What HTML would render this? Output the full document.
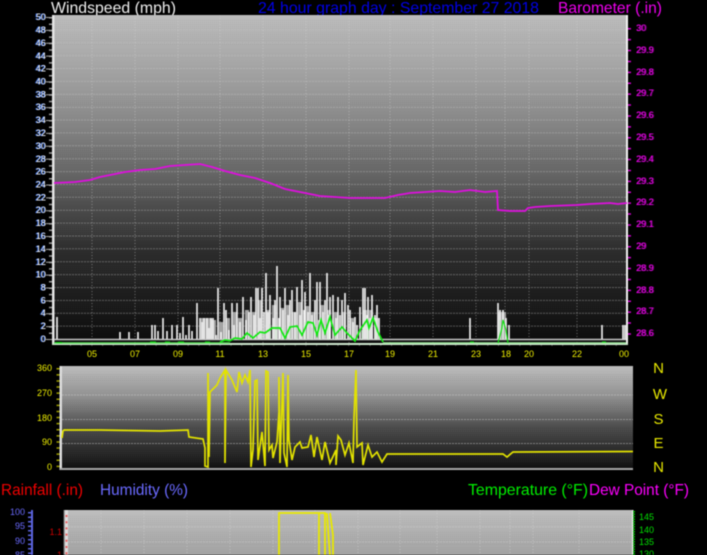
<!DOCTYPE html>
<html><head><meta charset="utf-8"><style>
html,body{margin:0;padding:0;background:#000;width:707px;height:555px;overflow:hidden}
svg{display:block;filter:blur(.45px)}
text{font-family:"Liberation Sans",sans-serif}
.t{font-size:16px}
</style></head><body>
<svg width="707" height="555" viewBox="0 0 707 555" xmlns="http://www.w3.org/2000/svg">
<defs>
<linearGradient id="g1" x1="0" y1="0" x2="0" y2="1">
<stop offset="0" stop-color="#bdbdbd"/><stop offset=".25" stop-color="#969696"/><stop offset=".48" stop-color="#666"/><stop offset=".6" stop-color="#484848"/><stop offset=".72" stop-color="#2c2c2c"/><stop offset=".86" stop-color="#1c1c1c"/><stop offset="1" stop-color="#0c0c0c"/>
</linearGradient>
<linearGradient id="g2" x1="0" y1="0" x2="0" y2="1">
<stop offset="0" stop-color="#bdbdbd"/><stop offset=".3" stop-color="#8f8f8f"/><stop offset=".6" stop-color="#4a4a4a"/><stop offset="1" stop-color="#0e0e0e"/>
</linearGradient>
<linearGradient id="g3" x1="0" y1="0" x2="0" y2="1">
<stop offset="0" stop-color="#bebebe"/><stop offset="1" stop-color="#a2a2a2"/>
</linearGradient>
<pattern id="dots" width="2" height="2" patternUnits="userSpaceOnUse"><rect width="1" height="1" fill="#000" fill-opacity=".06"/><rect x="1" y="1" width="1" height="1" fill="#fff" fill-opacity=".04"/></pattern>
</defs>
<rect width="707" height="555" fill="#000"/>

<text class="t" x="51" y="13" fill="#eee" textLength="125" lengthAdjust="spacingAndGlyphs">Windspeed (mph)</text>
<text class="t" x="258" y="13" fill="#0000e6" textLength="281" lengthAdjust="spacingAndGlyphs">24 hour graph day : September 27 2018</text>
<text class="t" x="558" y="13" fill="#ee00ee" textLength="104" lengthAdjust="spacingAndGlyphs">Barometer (.in)</text>

<!-- main chart -->
<rect x="54" y="15" width="572" height="329" fill="url(#g1)"/>
<path d="M54 20H626V45H54ZM54 95H626V108H54ZM54 148H626V165H54ZM54 185H626V200H54ZM54 225H626V240H54ZM54 265H626V285H54ZM54 300H626V315H54Z" fill="url(#dots)"/>
<path d="M54 326.1H626M54 313.2H626M54 300.4H626M54 287.5H626M54 274.6H626M54 261.7H626M54 248.8H626M54 236H626M54 223.1H626M54 210.2H626M54 197.3H626M54 184.4H626M54 171.6H626M54 158.7H626M54 145.8H626M54 132.9H626M54 120H626M54 107.2H626M54 94.3H626M54 81.4H626M54 68.5H626M54 55.6H626M54 42.8H626M54 29.9H626" stroke="#c8c8c8" stroke-opacity=".38" stroke-width="1" stroke-dasharray="2 1"/>
<path d="M92 15V344M135 15V344M178 15V344M220 15V344M263 15V344M306 15V344M349 15V344M390 15V344M433 15V344M476 15V344M505 15V344M529 15V344M577 15V344" stroke="#d8d8d8" stroke-opacity=".45" stroke-width="1" stroke-dasharray="1 2"/>
<!-- axes -->
<rect x="52" y="15" width="2.5" height="330" fill="#e4e4e4"/>
<rect x="626" y="15" width="2" height="330" fill="#f2f2f2"/>
<rect x="52" y="343" width="576" height="2" fill="#cfe8cf"/>
<path d="M50.5 17V340" stroke="#999" stroke-width="3" stroke-dasharray="1.5 4.94"/>
<path d="M49 17V340" stroke="#aaa" stroke-width="6" stroke-dasharray="1 11.88"/>
<path d="M629.5 28V340" stroke="#c0c" stroke-width="3" stroke-dasharray="1.5 9.4"/>
<!-- baseline -->
<path d="M54 339.5H626" stroke="#c8c8c8" stroke-width="1.6"/>
<!-- gray bars -->
<path d="M203 339V318M206 339V318M210 339V318M214 339V320M221 339V322M228 339V318M235 339V312M240 339V318M247 339V310M254 339V312M260 339V300M268 339V310M274 339V305M282 339V308M288 339V305M294 339V312M300 339V302M307 339V306M313 339V312M322 339V305M329 339V310M336 339V312M344 339V312M352 339V318M365 339V310M371 339V310M376 339V318M500 339V312M504 339V312" stroke="#a4a4a4" stroke-width="4"/>
<!-- white gust bars -->
<path d="M57 339V317M120 339V332M129 339V332M138 339V332M152 339V325M155 339V325M158 339V331M163 339V318M167 339V331M172 339V325M177 339V325M180 339V333M183 339V317M186 339V335M189 339V325M192 339V331M197 339V303M200 339V318M202 339V322M204 339V318M207 339V318M209 339V328M211 339V318M213 339V318M216 339V335M218 339V288M221 339V332M224 339V303M226 339V310M229 339V330M232 339V303M234 339V325M237 339V303M240 339V322M243 339V297M246 339V320M249 339V312M251 339V297M254 339V315M256 339V288M258 339V288M260 339V318M262 339V288M264 339V312M266 339V273M268 339V312M270 339V295M273 339V318M275 339V300M277 339V266M279 339V318M280 339V297M283 339V310M285 339V288M288 339V315M290 339V300M292 339V290M295 339V312M297 339V287M300 339V315M302 339V280M304 339V310M305 339V292M308 339V312M310 339V273M312 339V315M315 339V300M317 339V282M319 339V320M320 339V282M323 339V312M325 339V300M327 339V273M329 339V315M330 339V297M333 339V295M336 339V318M338 339V297M340 339V315M342 339V300M345 339V293M348 339V305M350 339V310M353 339V322M355 339V317M357 339V325M360 339V307M363 339V288M365 339V288M367 339V315M368 339V297M370 339V318M372 339V295M375 339V315M377 339V305M379 339V318M470 339V318M498 339V303M500 339V310M503 339V310M506 339V318M509 339V325M602 339V325M623 339V325M625 339V325" stroke="#f4f4f4" stroke-width="1.6"/>
<!-- pale bars -->
<path d="M262 340V330M270 340V324M276 340V330M282 340V328M290 340V322M297 340V330M305 340V322M312 340V328M320 340V326M328 340V324M336 340V330M345 340V332M362 340V330M368 340V324M376 340V330M500 340V320M503 340V328" stroke="#cfe8cf" stroke-width="1.5" stroke-opacity=".8"/>
<!-- green -->
<path d="M54 343H230" stroke="#5fe05f" stroke-width="1.5"/>
<path d="M383 343H626" stroke="#9ee89e" stroke-width="1.5"/>
<polyline fill="none" stroke="#12e812" stroke-width="1.7" points="220,342 225,340 230,340.7 235,338 242,339 247,333 253,338 260,332 265,333 272,328 280,328 285,338 290,327 297,326 302,335 308,322 313,323 317,335 321,320 325,333 330,317 335,335 342,327 347,333 355,341 360,330 367,320 369,328 373,318 378,332 383,342"/>
<path d="M56 342.5H62M150 342H156M165 342H170M178 342H184M205 342H210M470 342H474M602 342H606" stroke="#12e012" stroke-width="1"/>
<polyline fill="none" stroke="#12e012" stroke-width="1.2" points="498,343 502,328 503,320 506,330 508,343"/>
<!-- barometer -->
<polyline fill="none" stroke="#dd10dd" stroke-width="1.8" points="54,183 75,182 90,180 100,177 110,175 125,172 140,170 155,169 170,166 185,165 200,164 212,167 225,171 240,175 255,178 270,183 285,189 300,192 320,196 335,197 350,198 370,198 385,198 398,195 410,193 425,192 440,191 455,192 470,190 485,192 497,191 498,210 510,211 522,211 525,211 528,208 535,207 550,206 577,205 590,204 610,203 618,204 627,203"/>

<!-- left labels -->
<g fill="#fff" text-anchor="end" font-size="9" style="filter:drop-shadow(-1px 0 0 #3a78ff)">
<text x="46" y="20">50</text><text x="46" y="33">48</text><text x="46" y="46">46</text><text x="46" y="59">44</text><text x="46" y="71.5">42</text><text x="46" y="84.5">40</text><text x="46" y="97.5">38</text><text x="46" y="110">36</text><text x="46" y="123">34</text><text x="46" y="136">32</text><text x="46" y="149">30</text><text x="46" y="162">28</text><text x="46" y="174.5">26</text><text x="46" y="187.5">24</text><text x="46" y="200.5">22</text><text x="46" y="213">20</text><text x="46" y="226">18</text><text x="46" y="239">16</text><text x="46" y="252">14</text><text x="46" y="265">12</text><text x="46" y="277.5">10</text><text x="46" y="290.5">8</text><text x="46" y="303.5">6</text><text x="46" y="316">4</text><text x="46" y="329">2</text><text x="46" y="342">0</text>
</g>
<!-- right labels -->
<g fill="#f0f" font-size="9" style="filter:drop-shadow(1px 0 0 #7a0a7a)">
<text x="636" y="31">30</text><text x="636" y="53">29.9</text><text x="636" y="75">29.8</text><text x="636" y="96">29.7</text><text x="636" y="118">29.6</text><text x="636" y="140">29.5</text><text x="636" y="162">29.4</text><text x="636" y="184">29.3</text><text x="636" y="205">29.2</text><text x="636" y="227">29.1</text><text x="636" y="249">29</text><text x="636" y="271">28.9</text><text x="636" y="293">28.8</text><text x="636" y="314">28.7</text><text x="636" y="336">28.6</text>
</g>
<!-- x labels -->
<g fill="#f0f000" font-size="9" text-anchor="middle">
<text x="92" y="357">05</text><text x="135" y="357">07</text><text x="178" y="357">09</text><text x="220" y="357">11</text><text x="263" y="357">13</text><text x="306" y="357">15</text><text x="349" y="357">17</text><text x="390" y="357">19</text><text x="433" y="357">21</text><text x="476" y="357">23</text><text x="506" y="357">18</text><text x="529" y="357">20</text><text x="577" y="357">22</text><text x="624" y="357">00</text>
</g>
<path d="M70 345.5H626" stroke="#555" stroke-width="1" stroke-dasharray="1 9.7"/>

<!-- direction chart -->
<rect x="61" y="366" width="572" height="104" fill="url(#g2)"/>
<path d="M62 373H633V382H62ZM62 400H633V410H62ZM62 428H633V440H62ZM62 450H633V462H62Z" fill="url(#dots)"/>
<path d="M62 395H633M62 419.5H633M62 443.5H633" stroke="#ccc" stroke-opacity=".5" stroke-dasharray="2 1"/>
<rect x="59.5" y="366" width="2.5" height="104" fill="#ddd"/>
<rect x="60" y="468" width="573" height="2" fill="#a8a8a8"/>
<path d="M58 368V468" stroke="#a0a000" stroke-width="3" stroke-dasharray="1.5 4.6"/>
<g fill="#f0f000" font-size="9" text-anchor="end">
<text x="52" y="371">360</text><text x="52" y="396">270</text><text x="52" y="421">180</text><text x="52" y="445">90</text><text x="52" y="470">0</text>
</g>
<polyline fill="none" stroke="#e2e200" stroke-width="1.7" points="62,438 63,431 64,430 100,430 130,430.5 160,431 188,430 189,437 203,439 205,448 205,466 208,467 208,373 209,457 210,392 217,385 220,378 225,370 225,463 226,370 232,380 237,392 239,372 242,383 245,375 248,382 250,370 251,467 253,450 255,381 257,380 258,460 262,432 265,466 266,371 268,372 269,450 272,445 273,458 277,442 279,412 279,377 280,463 283,373 284,453 287,467 288,375 289,440 292,460 295,447 300,442 302,448 308,447 311,435 314,457 317,437 322,460 325,442 330,463 336,450 336,465 338,436 341,440 345,455 349,443 353,463 354,418 356,370 357,447 362,443 363,465 368,445 372,457 377,452 382,462 387,454 400,454 503,454 507,457 513,452 633,451.5"/>
<g fill="#e8e800" font-size="15" text-anchor="middle">
<text x="658.5" y="373">N</text><text x="660" y="399">W</text><text x="658.5" y="424">S</text><text x="658.5" y="448">E</text><text x="658.5" y="472">N</text>
</g>

<!-- legend -->
<text class="t" x="1" y="495" fill="#f00000" textLength="82" lengthAdjust="spacingAndGlyphs">Rainfall (.in)</text>
<text class="t" x="100" y="495" fill="#6a6aff" textLength="88" lengthAdjust="spacingAndGlyphs">Humidity (%)</text>
<text class="t" x="468" y="495" fill="#00ee00" textLength="120" lengthAdjust="spacingAndGlyphs">Temperature (°F)</text>
<text class="t" x="589" y="495" fill="#f0f" textLength="100" lengthAdjust="spacingAndGlyphs">Dew Point (°F)</text>

<!-- bottom chart -->
<rect x="64" y="510" width="568" height="45" fill="url(#g3)"/>
<path d="M68 516H632V526H68ZM68 532H632V546H68Z" fill="url(#dots)"/>
<rect x="63.5" y="510" width="1" height="45" fill="#777"/>
<rect x="65" y="510" width="3" height="45" fill="#ddd"/>
<path d="M66.5 515V555" stroke="#e86060" stroke-width="2" stroke-dasharray="2 4.2"/>
<path d="M68 527H632M68 542H632" stroke="#ccc" stroke-opacity=".5" stroke-dasharray="2 1"/>
<path d="M101 510V555M144 510V555M187 510V555M230 510V555M273 510V555M315 510V555M358 510V555M400 510V555M437 510V555M480 510V555M510 510V555M533 510V555M579 510V555" stroke="#d8d8d8" stroke-opacity=".5" stroke-dasharray="1 2"/>
<path d="M279 556V513H319V556M319 513H325V556M325 514H327L330 556M330 513L333 535V556" fill="none" stroke="#e8e800" stroke-width="1.8"/>
<rect x="31" y="510" width="2" height="45" fill="#5c64e0"/>
<path d="M29.5 512V555" stroke="#5c64e0" stroke-width="3" stroke-dasharray="1.5 3"/>
<g fill="#6a6aff" font-size="9" text-anchor="end">
<text x="25" y="515">100</text><text x="25" y="529">95</text><text x="25" y="544">90</text><text x="25" y="558">85</text>
</g>
<g fill="#d00000" font-size="9" text-anchor="end"><text x="62" y="535">1.1</text><text x="62" y="558">1</text></g>
<rect x="632" y="510" width="1.5" height="45" fill="#eee"/>
<path d="M634 511V555" stroke="#00c000" stroke-width="2" stroke-dasharray="1.5 1"/>
<g fill="#00e000" font-size="9">
<text x="639" y="520">145</text><text x="639" y="533">140</text><text x="639" y="545">135</text><text x="639" y="557">130</text>
</g>
</svg>
</body></html>
